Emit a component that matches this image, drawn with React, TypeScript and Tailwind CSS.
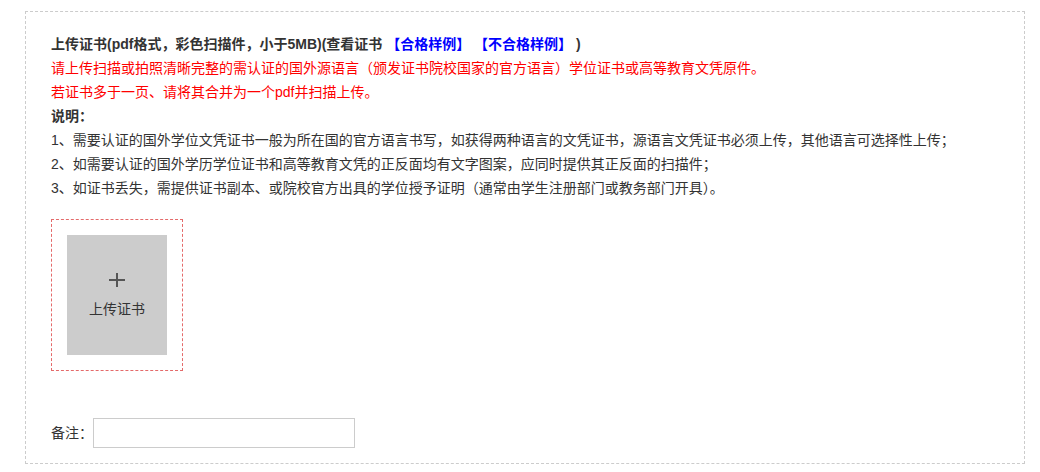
import React from 'react';

const notes = [
  '1、需要认证的国外学位文凭证书一般为所在国的官方语言书写，如获得两种语言的文凭证书，源语言文凭证书必须上传，其他语言可选择性上传；',
  '2、如需要认证的国外学历学位证书和高等教育文凭的正反面均有文字图案，应同时提供其正反面的扫描件；',
  '3、如证书丢失，需提供证书副本、或院校官方出具的学位授予证明（通常由学生注册部门或教务部门开具）。',
];

export default function App() {
  return (
    <div className="min-h-[472px] bg-white pt-[11px] pl-[25px] text-[14px] text-[#333] [font-family:'Liberation_Sans','Noto_Sans_CJK_SC',sans-serif]">
      <div className="w-[1000px] h-[453px] border border-dashed border-[#ccc] px-[25px] pt-[20px]">
        <div className="leading-[24px]">
          <p className="font-bold">
            上传证书(pdf格式，彩色扫描件，小于5MB)(查看证书{' '}
            <a className="text-[#0000ff] cursor-pointer">【合格样例】</a>{' '}
            <a className="text-[#0000ff] cursor-pointer">【不合格样例】</a> )
          </p>
          <p className="text-[#ff0000]">
            请上传扫描或拍照清晰完整的需认证的国外源语言（颁发证书院校国家的官方语言）学位证书或高等教育文凭原件。
          </p>
          <p className="text-[#ff0000]">若证书多于一页、请将其合并为一个pdf并扫描上传。</p>
          <p className="font-bold">说明：</p>
          {notes.map((n) => (
            <p key={n}>{n}</p>
          ))}
        </div>

        <div className="mt-[19px] w-[132px] h-[152px] border border-dashed border-[#e46a6a] p-[15px]">
          <div className="w-[100px] h-[120px] bg-[#cccccc] flex flex-col items-center pt-[38px] cursor-pointer">
            <svg width="16" height="14" viewBox="0 0 16 14" className="block">
              <path d="M8 0v14M0 7h16" stroke="#555" strokeWidth="2" />
            </svg>
            <span className="mt-[12px] leading-[20px] text-[#333]">上传证书</span>
          </div>
        </div>

        <div className="mt-[47px] flex items-center">
          <span className="w-[42px]">备注：</span>
          <input className="w-[262px] h-[30px] border border-[#ccc] outline-none px-2 text-[14px]" />
        </div>
      </div>
    </div>
  );
}
